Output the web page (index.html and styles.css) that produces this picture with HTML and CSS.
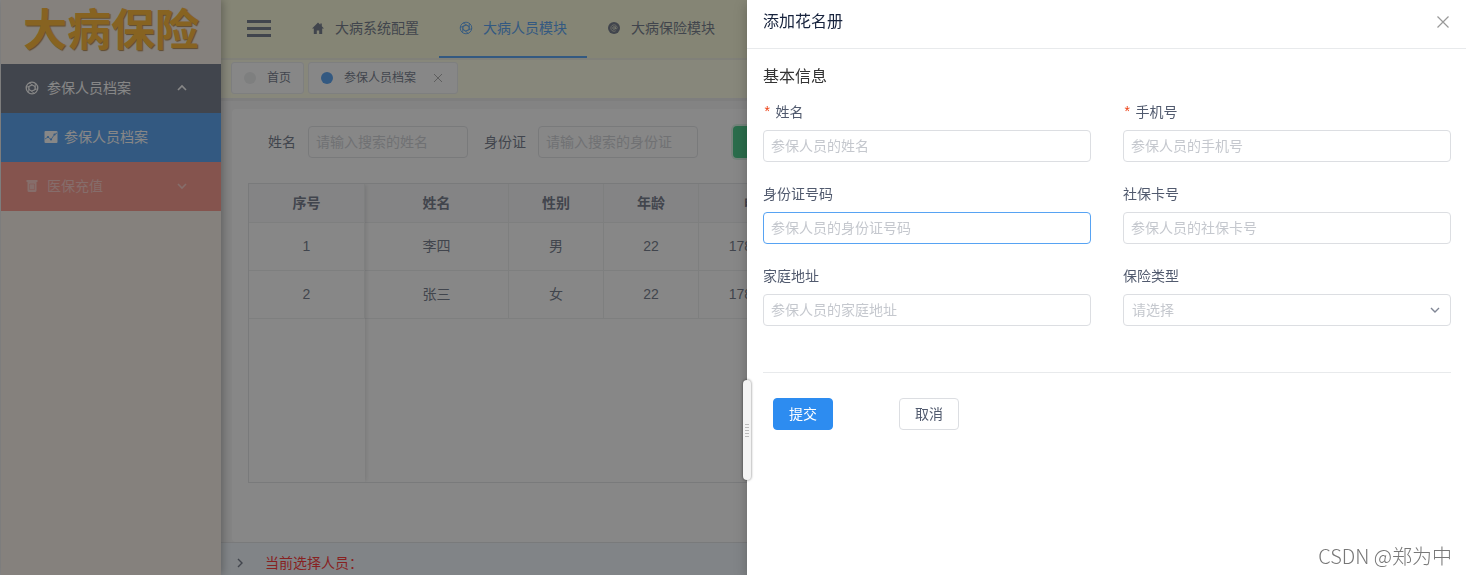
FILE: index.html
```html
<!DOCTYPE html>
<html lang="zh-CN">
<head>
    <meta charset="UTF-8">
    <meta name="viewport" content="width=device-width, initial-scale=1.0">
    <title>大病保险</title>
    <link rel="stylesheet" href="styles.css">
</head>
<body>

    <div class="app">
        <aside class="sider">
            <div class="logo">大病保险</div>
            <nav class="menu">
                <a href="#" class="menu-item menu-open">
                    <svg class="icon" viewBox="0 0 14 14"><circle cx="7" cy="7" r="5.8" fill="none" stroke="currentColor" stroke-width="1.3"/><path d="M7 4L10 5.500V8.500L7 10 4 8.500V5.500zM4 1.800L10 5.500M10.300 2.200V8.500M13 7.500L7 10M9.500 12.500L4 8.500M3.700 11.800V5.500M1 6.500L7 4" fill="none" stroke="currentColor" stroke-width="0.900"/></svg>
                    <span>参保人员档案</span>
                    <svg class="arrow" viewBox="0 0 12 12"><path d="M2 8l4-4 4 4" fill="none" stroke="currentColor" stroke-width="1.6"/></svg>
                </a>
                <a href="#" class="menu-item menu-sub">
                    <svg class="icon" viewBox="0 0 14 14"><rect x="0.5" y="1" width="13" height="12" rx="1" fill="currentColor"/><path d="M1 9l3-2 3 2.500 3.500-5 2.500-1.500" fill="none" stroke="#2d8cf0" stroke-width="0.800"/><circle cx="4" cy="7" r="1.100" fill="#2d8cf0"/><circle cx="7" cy="9.500" r="1.100" fill="#2d8cf0"/><circle cx="10.500" cy="4.500" r="1.100" fill="#2d8cf0"/></svg>
                    <span>参保人员档案</span>
                </a>
                <a href="#" class="menu-item menu-red">
                    <svg class="icon" viewBox="0 0 14 14"><path d="M1.500 1h11v2h-11zM2.500 3h9v8.500a1.500 1.500 0 0 1-1.500 1.500h-6a1.500 1.500 0 0 1-1.500-1.500z" fill="currentColor"/><path d="M4.500 5h5v5.500h-5z" fill="none" stroke="#fa8072" stroke-width="0.500"/></svg>
                    <span>医保充值</span>
                    <svg class="arrow" viewBox="0 0 12 12"><path d="M2 4l4 4 4-4" fill="none" stroke="currentColor" stroke-width="1.6"/></svg>
                </a>
            </nav>
        </aside>

        <div class="main">
            <header class="header">
                <button class="collapse" aria-label="菜单"><i></i><i></i><i></i></button>
                <nav class="nav">
                    <a href="#" class="nav-item">
                        <svg class="icon" viewBox="0 0 14 14"><path d="M7 1.500L1 7.500h1.800V13H5.800V9.500h2.400V13h3V7.500H13L10.800 5.300V2.500H9.300v1.300z" fill="currentColor"/></svg>
                        <span>大病系统配置</span>
                    </a>
                    <a href="#" class="nav-item active">
                        <svg class="icon" viewBox="0 0 14 14"><circle cx="7" cy="7" r="5.800" fill="none" stroke="currentColor" stroke-width="0.900"/><path d="M7 4L10 5.500V8.500L7 10 4 8.500V5.500zM4 1.800L10 5.500M10.300 2.200V8.500M13 7.500L7 10M9.500 12.500L4 8.500M3.700 11.800V5.500M1 6.500L7 4" fill="none" stroke="currentColor" stroke-width="0.800"/></svg>
                        <span>大病人员模块</span>
                    </a>
                    <a href="#" class="nav-item">
                        <svg class="icon" viewBox="0 0 14 14"><circle cx="7" cy="7" r="6" fill="currentColor"/><circle cx="7" cy="7" r="1.300" fill="none" stroke="#fafad2" stroke-width="0.700"/><path d="M8.500 5.300L8.300 7.800Q10.200 8.500 10.200 6.600A3.200 3.200 0 1 0 8.700 9.800" fill="none" stroke="#fafad2" stroke-width="0.600"/></svg>
                        <span>大病保险模块</span>
                    </a>
                </nav>
            </header>

            <div class="tabs">
                <a href="#" class="tab"><i class="dot"></i><span>首页</span></a>
                <a href="#" class="tab tab-active"><i class="dot"></i><span>参保人员档案</span>
                    <svg class="tab-close" viewBox="0 0 10 10"><path d="M1 1l8 8M9 1l-8 8" stroke="currentColor"/></svg>
                </a>
            </div>

            <div class="content">
                <form class="search">
                    <label for="searchNama">姓名</label>
                    <input type="text" id="searchNama" placeholder="请输入搜索的姓名">
                    <label for="searchId">身份证</label>
                    <input type="text" id="searchId" placeholder="请输入搜索的身份证">
                    <button type="button" class="btn-search">搜索</button>
                </form>
                <div class="table-box">
                    <table>
                        <colgroup>
                            <col class="col-index"><col class="col-name"><col class="col-small"><col class="col-small"><col class="col-phone"><col>
                        </colgroup>
                        <thead>
                            <tr>
                                <th>序号</th>
                                <th>姓名</th>
                                <th>性别</th>
                                <th>年龄</th>
                                <th>电话号码</th>
                                <th></th>
                            </tr>
                        </thead>
                        <tbody>
                            <tr>
                                <td>1</td>
                                <td>李四</td>
                                <td>男</td>
                                <td>22</td>
                                <td>17800000000</td>
                                <td></td>
                            </tr>
                            <tr>
                                <td>2</td>
                                <td>张三</td>
                                <td>女</td>
                                <td>22</td>
                                <td>17800000000</td>
                                <td></td>
                            </tr>
                        </tbody>
                    </table>
                    <div class="fixed-col"></div>
                </div>
            </div>

            <footer class="footer">
                <svg class="arrow" viewBox="0 0 12 12"><path d="M4 2l4 4-4 4" fill="none" stroke="currentColor" stroke-width="1.400"/></svg>
                <span>当前选择人员：</span>
            </footer>
        </div>
    </div>

    <div class="mask"></div>

    <section class="drawer">
        <div class="drag"><i></i><i></i><i></i><i></i><i></i></div>
        <div class="drawer-header">
            <h2>添加花名册</h2>
            <button class="close" aria-label="关闭">
                <svg viewBox="0 0 14 14"><path d="M1.500 1.500l11 11M12.500 1.500l-11 11" stroke="currentColor" stroke-width="1.200"/></svg>
            </button>
        </div>
        <form class="drawer-body">
            <h3>基本信息</h3>
            <div class="form-grid">
                <div class="field">
                    <label for="name" class="required">姓名</label>
                    <input type="text" id="name" placeholder="参保人员的姓名">
                </div>
                <div class="field">
                    <label for="phone" class="required">手机号</label>
                    <input type="text" id="phone" placeholder="参保人员的手机号">
                </div>
                <div class="field">
                    <label for="idCard">身份证号码</label>
                    <input type="text" id="idCard" class="hover" placeholder="参保人员的身份证号码">
                </div>
                <div class="field">
                    <label for="socialCard">社保卡号</label>
                    <input type="text" id="socialCard" placeholder="参保人员的社保卡号">
                </div>
                <div class="field">
                    <label for="address">家庭地址</label>
                    <input type="text" id="address" placeholder="参保人员的家庭地址">
                </div>
                <div class="field">
                    <label for="type">保险类型</label>
                    <div class="select">
                        <select id="type">
                            <option>请选择</option>
                        </select>
                        <svg class="arrow" viewBox="0 0 12 12"><path d="M2 4l4 4 4-4" fill="none" stroke="currentColor" stroke-width="1.400"/></svg>
                    </div>
                </div>
            </div>
            <div class="actions">
                <button type="button" class="btn btn-primary">提交</button>
                <button type="button" class="btn">取消</button>
            </div>
        </form>
        <div class="watermark">CSDN @郑为中</div>
    </section>

</body>
</html>
```
FILE: styles.css
```css
* {
    box-sizing: border-box;
}
body {
    margin: 0;
    font-family: "Liberation Sans", "Noto Sans CJK SC", sans-serif;
    font-size: 14px;
    line-height: 20px;
    color: #515a6e;
    overflow: hidden;
}
a {
    color: inherit;
    text-decoration: none;
}
button, input, select {
    font: inherit;
    color: inherit;
    margin: 0;
}
h2, h3 {
    margin: 0;
    font-size: 16px;
    font-weight: 400;
    line-height: 24px;
}
.icon {
    width: 14px;
    height: 14px;
    flex: none;
}
.arrow {
    width: 12px;
    height: 12px;
    flex: none;
}

/* sidebar */
.app {
    display: flex;
    height: 100vh;
    border-left: 1px solid #ffffff;
}
.sider {
    flex: none;
    width: 220px;
    background: #faf0e6;
    box-shadow: 2px 0 8px rgba(0, 0, 0, 0.35);
    z-index: 1;
}
.logo {
    height: 64px;
    font-family: "Noto Sans CJK SC", sans-serif;
    font-size: 44px;
    font-weight: 700;
    line-height: 54px;
    text-align: center;
    color: #ffa500;
    text-shadow: 1px 1px 1px #a06a20;
}
.menu-item {
    display: flex;
    align-items: center;
    gap: 8px;
    height: 49px;
    padding: 0 33px 2px 24px;
    color: #ffffff;
}
.menu-item .arrow {
    margin-left: auto;
}
.menu-open {
    background: #515a6e;
}
.menu-sub {
    padding-left: 43px;
    gap: 6px;
    background: #2d8cf0;
}
.menu-red {
    background: #fa8072;
    color: rgba(255, 255, 255, 0.5);
}

/* header */
.main {
    flex: 1;
    min-width: 0;
    display: flex;
    flex-direction: column;
    background: #f5f5f5;
}
.header {
    flex: none;
    display: flex;
    align-items: center;
    height: 60px;
    padding-left: 26px;
    background: #fafad2;
    border-bottom: 2px solid #eeeedb;
}
.collapse {
    display: flex;
    flex-direction: column;
    gap: 4px;
    width: 24px;
    padding: 0 0 2px;
    border: none;
    background: none;
}
.collapse i {
    height: 3px;
    background: #515a6e;
}
.nav {
    display: flex;
    margin-left: 20px;
    height: 58px;
}
.nav-item {
    display: flex;
    align-items: center;
    gap: 10px;
    padding: 0 20px;
    border-bottom: 2px solid transparent;
}
.nav-item.active {
    color: #2d8cf0;
    border-color: #2d8cf0;
}

/* tabs */
.tabs {
    flex: none;
    display: flex;
    gap: 4px;
    height: 41px;
    padding: 2px 10px;
    background: #ffffe0;
    border-bottom: 3px solid #e8e8e8;
}
.tab {
    display: flex;
    align-items: center;
    gap: 11px;
    height: 32px;
    padding: 0 12px;
    border: 1px solid #e8eaec;
    border-radius: 3px;
    background: #ffffff;
    font-size: 12px;
}
.dot {
    width: 12px;
    height: 12px;
    border-radius: 50%;
    background: #e8eaec;
}
.tab-active .dot {
    background: #2d8cf0;
}
.tab-active {
    padding-right: 14px;
}
.tab-close {
    width: 10px;
    height: 10px;
    margin-left: 6px;
    color: #999999;
}

/* content */
.content {
    flex: 1;
    margin: 8px 11px 0;
    padding: 17px 16px;
    border-radius: 4px;
    background: #ffffff;
}
.search {
    display: flex;
    align-items: center;
    padding-left: 20px;
}
.search label {
    margin-right: 12px;
}
.search input {
    width: 160px;
    margin-right: 16px;
}
input, select {
    width: 100%;
    height: 32px;
    padding: 0 7px;
    border: 1px solid #dcdee2;
    border-radius: 4px;
    background: #ffffff;
    outline: none;
}
input::placeholder {
    color: #c5c8ce;
    opacity: 1;
}
.btn-search {
    height: 32px;
    margin-left: 19px;
    padding: 0 15px;
    border: none;
    border-radius: 4px;
    color: #ffffff;
    background: #19be6b;
    box-shadow: 0 0 0 2px rgba(25, 190, 107, 0.2);
}
.table-box {
    position: relative;
    height: 300px;
    margin-top: 25px;
    border: 1px solid #dcdee2;
    overflow: hidden;
}
table {
    width: 100%;
    table-layout: fixed;
    border-collapse: separate;
    border-spacing: 0;
}
.col-index {
    width: 116px;
}
.col-name {
    width: 144px;
}
.col-small {
    width: 95px;
}
.col-phone {
    width: 146px;
}
th, td {
    height: 48px;
    padding: 0 0 2px;
    border-right: 1px solid #e8eaec;
    border-bottom: 1px solid #e8eaec;
    text-align: center;
}
th {
    height: 39px;
    padding: 0;
    background: #f8f8f9;
}
.fixed-col {
    position: absolute;
    top: 0;
    left: 0;
    bottom: 0;
    width: 116px;
    box-shadow: 2px 0 4px -1px rgba(0, 0, 0, 0.15);
}
.footer {
    flex: none;
    display: flex;
    align-items: center;
    gap: 19px;
    height: 33px;
    padding: 8px 13px 0;
    border-top: 1px solid #dcdee2;
    background: #f0f8ff;
}
.footer span {
    color: #ff0000;
}

/* drawer */
.mask {
    position: fixed;
    inset: 0;
    z-index: 10;
    background: rgba(55, 55, 55, 0.6);
}
.drawer {
    position: fixed;
    top: 0;
    right: 0;
    bottom: 0;
    z-index: 11;
    width: 719px;
    background: #ffffff;
    box-shadow: 0 4px 12px rgba(0, 0, 0, 0.25);
}
.drawer-header {
    display: flex;
    align-items: center;
    justify-content: space-between;
    height: 49px;
    padding: 0 16px 4px;
    border-bottom: 1px solid #e8eaec;
}
.drawer-header h2 {
    color: #17233d;
}
.close {
    display: flex;
    padding: 0;
    border: none;
    background: none;
    color: #999999;
}
.close svg {
    width: 14px;
    height: 14px;
}
.drawer-body {
    padding: 16px 15px 0 16px;
}
.drawer-body h3 {
    color: #333333;
}
.form-grid {
    display: grid;
    grid-template-columns: 1fr 1fr;
    gap: 22px 32px;
    padding: 13px 0 46px;
    border-bottom: 1px solid #e8eaec;
}
.field label {
    display: block;
    margin-bottom: 8px;
}
.field label.required::before {
    content: "*";
    margin-right: 4px;
    font-family: "Liberation Mono", monospace;
    line-height: 1;
    color: #ed4014;
}
.field input.hover {
    border-color: #57a3f3;
}
.select {
    position: relative;
}
.select select {
    display: block;
    appearance: none;
    padding-left: 8px;
    color: #c5c8ce;
}
.select .arrow {
    position: absolute;
    top: 10px;
    right: 10px;
    color: #808695;
    pointer-events: none;
}
.actions {
    display: flex;
    gap: 66px;
    padding: 25px 10px;
}
.btn {
    height: 32px;
    padding: 0 15px;
    border: 1px solid #dcdee2;
    border-radius: 4px;
    background: #ffffff;
}
.btn-primary {
    border-color: #2d8cf0;
    color: #ffffff;
    background: #2d8cf0;
}
.drag {
    position: absolute;
    top: 380px;
    left: -4px;
    display: flex;
    flex-direction: column;
    align-items: center;
    justify-content: center;
    gap: 2px;
    width: 8px;
    height: 100px;
    border-radius: 6px;
    background: #f3f3f3;
    box-shadow: 0 0 2px 1px rgba(0, 0, 0, 0.25);
}
.drag i {
    width: 4px;
    height: 1px;
    background: #bbbbbb;
}
.watermark {
    position: absolute;
    right: 14px;
    bottom: 6px;
    font-family: "Noto Sans CJK SC", sans-serif;
    font-size: 20px;
    font-weight: 300;
    line-height: 26px;
    color: #777777;
}
```
